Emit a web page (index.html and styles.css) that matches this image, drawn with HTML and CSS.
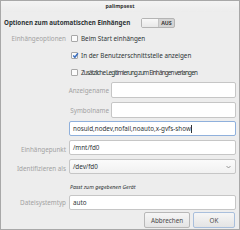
FILE: index.html
```html
<!DOCTYPE html>
<html>
<head>
<meta charset="utf-8">
<link rel="stylesheet" href="styles.css">
</head>
<body>
<div class="window">
  <div class="titlebar">palimpsest</div>
  <div class="content">
    <div class="head-row">
      <div class="heading">Optionen zum automatischen Einhängen</div>
      <div class="switch"><span class="knob"></span><span class="state">AUS</span></div>
    </div>
    <div class="form">
      <div class="label">Einhängeoptionen</div>
      <div class="check-row"><span class="box"></span><span>Beim Start einhängen</span></div>

      <div class="label"></div>
      <div class="check-row"><span class="box checked"><svg viewBox="0 0 8 8" width="7" height="7"><path d="M1.4 4 L3.3 6 L6.8 1.4" fill="none" stroke="#3b6fc0" stroke-width="1.7"/></svg></span><span>In der Benutzerschnittstelle anzeigen</span></div>

      <div class="label"></div>
      <div class="check-row"><span class="box"></span><span class="tight">Zusätzliche Legitimierung zum Einhängen verlangen</span></div>

      <div class="label"></div>
      <div class="sub">
        <div class="label">Anzeigename</div>
        <div class="entry"></div>
        <div class="label">Symbolname</div>
        <div class="entry"></div>
      </div>

      <div class="label"></div>
      <div class="entry focus">nosuid,nodev,nofail,noauto,x-gvfs-show<span class="caret"></span></div>

      <div class="label">Einhängepunkt</div>
      <div class="entry">/mnt/fd0</div>

      <div class="label">Identifizieren als</div>
      <div class="entry combo">/dev/fd0<svg class="chev" viewBox="0 0 6 4" width="5" height="4"><path d="M0.6 0.8 L3 3.2 L5.4 0.8" fill="none" stroke="#7a7a7a" stroke-width="0.9"/></svg></div>

      <div class="label"></div>
      <div class="hint">Passt zum gegebenen Gerät</div>

      <div class="label">Dateisystemtyp</div>
      <div class="entry last">auto</div>
    </div>
    <div class="buttons">
      <div class="btn cancel">Abbrechen</div>
      <div class="btn default">OK</div>
    </div>
  </div>
</div>
</body>
</html>
```
FILE: styles.css
```css
html, body {
  margin: 0;
  padding: 0;
  background: #ededed;
}
.window {
  width: 240px;
  height: 230px;
  box-sizing: border-box;
  border: 1px solid #a8a8a8;
  background: #ededed;
  font-family: "Noto Sans", "DejaVu Sans", sans-serif;
  font-size: 6.3px;
  color: #2e3436;
  display: flex;
  flex-direction: column;
}
.titlebar {
  height: 11px;
  line-height: 10px;
  text-align: center;
  font-weight: bold;
  font-size: 5.3px;
  color: #333;
  background: linear-gradient(#f4f4f4, #ececec);
}
.content {
  padding: 0 3px;
  display: flex;
  flex-direction: column;
}
.head-row {
  display: flex;
  align-items: center;
  height: 15px;
  margin-top: 3px;
}
.heading {
  font-weight: bold;
  font-size: 6.2px;
  width: 137px;
  white-space: nowrap;
}
.switch {
  width: 34px;
  height: 10px;
  box-sizing: border-box;
  border: 1px solid #b4b4b4;
  border-radius: 2px;
  background: #d4d4d4;
  display: flex;
  align-items: stretch;
}
.knob {
  width: 16px;
  background: linear-gradient(#f8f8f8, #e8e8e8);
  border-right: 1px solid #c4c4c4;
}
.state {
  flex: 1;
  text-align: center;
  font-weight: bold;
  font-size: 5.3px;
  line-height: 8px;
  color: #3a3a3a;
}
.form {
  display: grid;
  grid-template-columns: 62px 167px;
  column-gap: 3px;
}
.label {
  color: #a2a2a2;
  display: flex;
  align-items: center;
  justify-content: flex-end;
  white-space: nowrap;
}
.check-row {
  height: 17px;
  display: flex;
  align-items: center;
  gap: 3px;
  padding-left: 2px;
  white-space: nowrap;
}
.tight {
  letter-spacing: -0.8px;
}
.box {
  width: 7px;
  height: 7px;
  box-sizing: border-box;
  border: 1px solid #a8a8a8;
  background: #fbfbfb;
  border-radius: 1px;
  position: relative;
  flex: none;
}
.box svg {
  position: absolute;
  left: 0;
  top: -1px;
}
.sub {
  display: grid;
  grid-template-columns: 40px 125px;
  column-gap: 2px;
  row-gap: 4px;
  margin-top: 1px;
  margin-bottom: 3px;
}
.entry {
  height: 15px;
  box-sizing: border-box;
  border: 1px solid #c6c6c6;
  border-radius: 2px;
  background: #ffffff;
  display: flex;
  align-items: center;
  padding-left: 3px;
  white-space: nowrap;
  margin-bottom: 4px;
}
.sub .entry {
  margin-bottom: 0;
  height: 16px;
}
.entry.last {
  margin-bottom: 0;
}
.entry.focus {
  border-color: #8fb0dc;
}
.caret {
  display: inline-block;
  width: 1px;
  height: 8px;
  background: #2e3436;
}
.combo {
  justify-content: space-between;
  padding-right: 4px;
  background: linear-gradient(#fbfbfb, #f1f1f1);
}
.hint {
  font-style: italic;
  font-size: 5.3px;
  height: 17px;
  display: flex;
  align-items: center;
  padding-left: 1px;
}
.buttons {
  display: flex;
  justify-content: flex-end;
  gap: 3px;
  margin-top: 2px;
  padding-right: 1px;
}
.btn {
  height: 16px;
  box-sizing: border-box;
  border: 1px solid #b8b8b8;
  border-radius: 2px;
  background: linear-gradient(#f6f6f6, #e4e4e4);
  display: flex;
  align-items: center;
  justify-content: center;
  color: #4a4a4a;
}
.btn.cancel {
  width: 46px;
}
.btn.default {
  width: 42px;
  border-color: #a9bfdc;
}
```
